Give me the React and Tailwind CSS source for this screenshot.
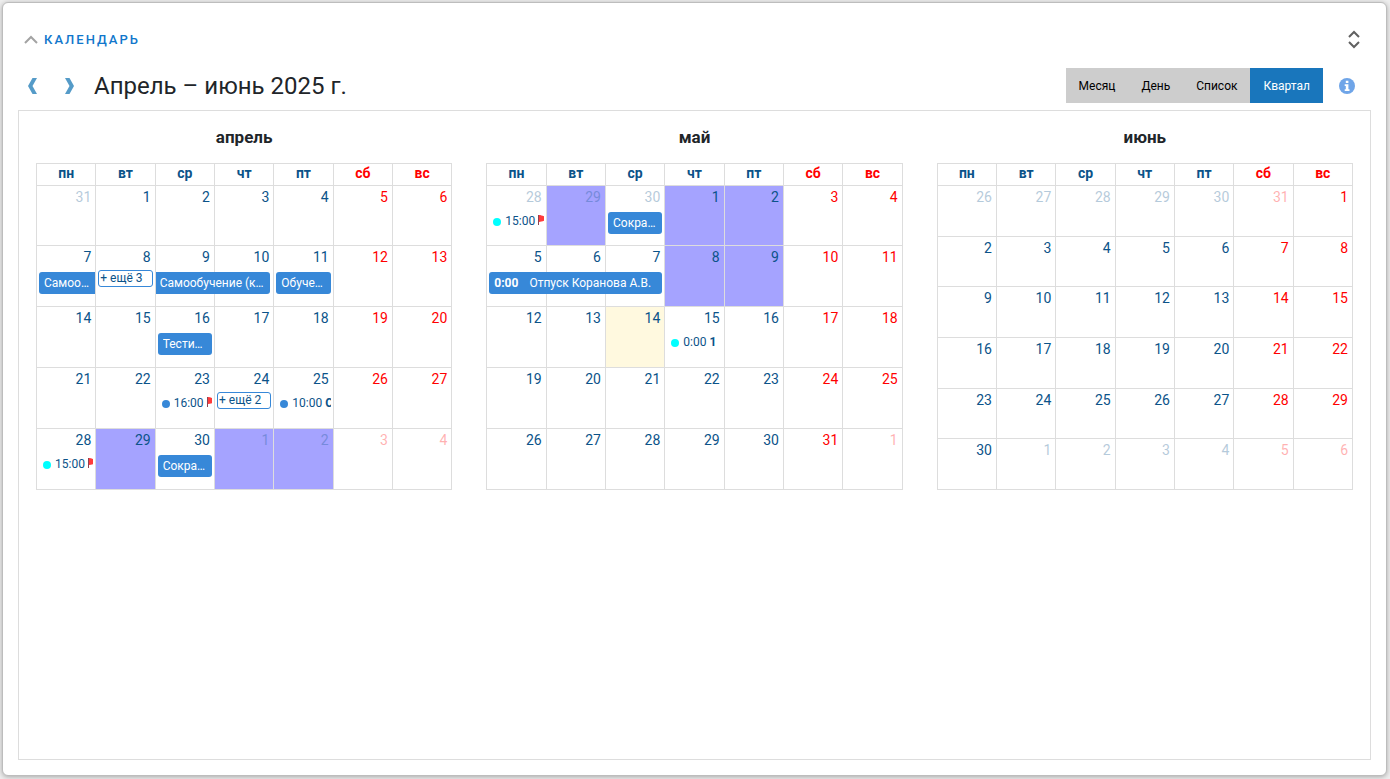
import clsx from 'clsx';

const WEEKDAYS = ['пн', 'вт', 'ср', 'чт', 'пт', 'сб', 'вс'];
const VIEWS = ['Месяц', 'День', 'Список', 'Квартал'];

// `first` is the day number of the top left cell, counted from day 1 of the month
const MONTHS = [
  {
    name: 'апрель',
    first: 0,
    length: 30,
    prevLength: 31,
    weeks: 5,
    shaded: [29, 31, 32],
    events: {
      7: { type: 'bar', text: 'Самообучение', continues: true },
      8: { type: 'more', text: '+ ещё 3' },
      9: { type: 'bar', text: 'Самообучение (курсы)', span: 2, continued: true },
      11: { type: 'bar', text: 'Обучение' },
      16: { type: 'bar', text: 'Тестирование' },
      23: { type: 'dot', time: '16:00', flag: true },
      24: { type: 'more', text: '+ ещё 2' },
      25: { type: 'dot', time: '10:00', text: 'Собрание' },
      28: { type: 'dot', time: '15:00', flag: true, cyan: true },
      30: { type: 'bar', text: 'Сокращённый день' },
    },
  },
  {
    name: 'май',
    first: -2,
    length: 31,
    prevLength: 30,
    weeks: 5,
    today: 14,
    shaded: [-1, 1, 2, 8, 9],
    events: {
      [-2]: { type: 'dot', time: '15:00', flag: true, cyan: true },
      0: { type: 'bar', text: 'Сокращённый день' },
      5: { type: 'bar', time: '0:00', text: 'Отпуск Коранова А.В.', span: 3 },
      15: { type: 'dot', time: '0:00', text: '1', cyan: true },
    },
  },
  { name: 'июнь', first: -5, length: 30, prevLength: 31, weeks: 6, shaded: [], events: {} },
];

function Flag() {
  return (
    <svg className="ml-[3px] h-3 w-3 shrink-0" viewBox="0 0 12 12" aria-hidden="true">
      <path d="M.5 0v10" stroke="#8a4655" strokeWidth="1" />
      <path d="M1 0c3 0 6 2 10 3.500C8 5 4 7 1 7z" fill="#ff3b3b" />
    </svg>
  );
}

function CalendarEvent({ event }) {
  if (event.type === 'more') {
    return (
      <button type="button" className="mx-0.5 block h-[17px] w-[calc(100%-4px)] rounded-[3px] border border-[#3788d8] bg-white px-px text-left text-xs leading-[15px] text-[#0b5389]">
        {event.text}
      </button>
    );
  }
  if (event.type === 'dot') {
    return (
      <a href="#event" className="mx-0.5 flex h-[22px] items-center overflow-hidden pl-1 text-xs whitespace-nowrap text-[#0b5389]">
        <span className={clsx('mt-0.5 mr-1 size-2 shrink-0 rounded-full', event.cyan ? 'bg-[#00ffff]' : 'bg-[#3788d8]')} />
        <span>{event.time}</span>
        {event.flag && <Flag />}
        {event.text && <b className="ml-[3px] font-bold">{event.text}</b>}
      </a>
    );
  }
  return (
    <a
      href="#event"
      className={clsx(
        'relative z-10 mt-0.5 flex h-[22px] items-center bg-[#3788d8] text-xs text-white',
        event.continued ? 'rounded-r-[3px] px-1' : 'ml-0.5 px-[5px]',
        event.continues && 'rounded-l-[3px]',
        !event.continued && !event.continues && 'rounded-[3px]',
        !event.span && (event.continues ? 'w-[calc(100%-2px)]' : 'w-[calc(100%-4px)]'),
        event.span === 2 && 'w-[calc(200%-2px)]',
        event.span === 3 && 'w-[calc(300%-2px)]',
      )}
    >
      {event.time && <b className="mr-[11px] font-bold">{event.time}</b>}
      <span className="truncate">{event.text}</span>
    </a>
  );
}

function DayCell({ month, day, weekend }) {
  const outside = day < 1 || day > month.length;
  const event = month.events[day];
  let label = day;
  if (day < 1) label = month.prevLength + day;
  if (day > month.length) label = day - month.length;

  return (
    <td
      className={clsx(
        'border border-[#ddd] p-0 align-top',
        month.shaded.includes(day) && 'bg-[#a5a3ff]',
        month.today === day && 'bg-[#fff9df]',
      )}
    >
      <div className={clsx('pt-px pr-1 text-right text-sm leading-5', weekend ? 'text-[#ff0000]' : 'text-[#0b5389]', outside && 'opacity-30')}>
        {label}
      </div>
      {event && <div className="h-7 pt-[3px]"><CalendarEvent event={event} /></div>}
    </td>
  );
}

function Month({ month }) {
  return (
    <section className="min-w-0 px-[17px]">
      <h3 className="pt-4 pb-[15px] text-center text-[17px] leading-[21px] font-bold text-[#212529]">{month.name}</h3>
      <table className="h-[327px] w-full table-fixed border-collapse">
        <thead>
          <tr className="h-[22px]">
            {WEEKDAYS.map((name, i) => (
              <th key={name} className={clsx('h-[22px] border border-[#ddd] p-0 pb-0.5 text-sm leading-[19px] font-bold', i > 4 ? 'text-[#ff0000]' : 'text-[#0b5389]')}>
                {name}
              </th>
            ))}
          </tr>
        </thead>
        <tbody>
          {Array.from({ length: month.weeks }, (_, week) => (
            <tr key={week} className={clsx(month.weeks === 5 && (week === 0 ? 'h-[60px]' : 'h-[61px]'))}>
              {WEEKDAYS.map((name, i) => (
                <DayCell key={name} month={month} day={month.first + week * 7 + i} weekend={i > 4} />
              ))}
            </tr>
          ))}
        </tbody>
      </table>
    </section>
  );
}

export default function App() {
  return (
    <div className="flex min-h-screen flex-col bg-[#eeeeee] p-0.5 pb-[3px] font-[Roboto,'Liberation_Sans',sans-serif]">
      <main className="mr-px flex flex-1 flex-col rounded-md border border-[#bdbdbd] bg-white px-[15px] pb-[15px] shadow-[0_1px_5px_rgba(0,0,0,0.3)]">
        <header className="flex h-[65px] items-center justify-between pt-2 pr-[11px] pl-1.5">
          <button type="button" className="flex items-center gap-1.5 text-[13px] font-medium tracking-[2px] text-[#1177cc] uppercase">
            <svg className="h-2.5 w-3.5" viewBox="0 0 14 10" fill="none" stroke="#a3a3a3" strokeWidth="2" aria-hidden="true">
              <path d="M1 8l6-6 6 6" />
            </svg>
            Календарь
          </button>
          <button type="button" aria-label="Развернуть">
            <svg className="h-5 w-3" viewBox="0 0 12 20" fill="none" stroke="#616161" strokeWidth="2" aria-hidden="true">
              <path d="M1 7l5-5 5 5M1 12l5 5 5-5" />
            </svg>
          </button>
        </header>

        <div className="flex h-[35px] items-center">
          <button type="button" aria-label="Назад" className="ml-[9px]">
            <svg className="h-4 w-2.5" viewBox="0 0 10 16" fill="#559bc8" aria-hidden="true">
              <path d="M5.500 0H10L5.500 8l4.500 8H5.500L1 8z" />
            </svg>
          </button>
          <button type="button" aria-label="Вперёд" className="ml-7">
            <svg className="h-4 w-2.5" viewBox="0 0 10 16" fill="#559bc8" aria-hidden="true">
              <path d="M4.500 0H0l4.500 8L0 16h4.500L9 8z" />
            </svg>
          </button>
          <h2 className="ml-[19px] text-2xl text-[#212529]">Апрель – июнь 2025 г.</h2>
          <div className="ml-auto flex h-full text-xs">
            {VIEWS.map((view) => (
              <button key={view} type="button" className={clsx('px-[13px]', view === 'Квартал' ? 'bg-[#1976bc] text-white' : 'bg-[#cdcdcd] text-black')}>
                {view}
              </button>
            ))}
          </div>
          <button type="button" aria-label="Справка" className="mr-4 ml-4">
            <svg className="size-4" viewBox="0 0 16 16" aria-hidden="true">
              <circle cx="8" cy="8" r="8" fill="#6fa5e8" />
              <path d="M6.800 2.800h2.600v2.300H6.800zM5.700 6.300h3.700v4.900h1.100v1.700H5.700v-1.700h1.100V8H5.700z" fill="#fff" />
            </svg>
          </button>
        </div>

        <div className="mt-[7px] grid flex-1 grid-cols-3 border border-[#ddd]">
          {MONTHS.map((month) => <Month key={month.name} month={month} />)}
        </div>
      </main>
    </div>
  );
}
